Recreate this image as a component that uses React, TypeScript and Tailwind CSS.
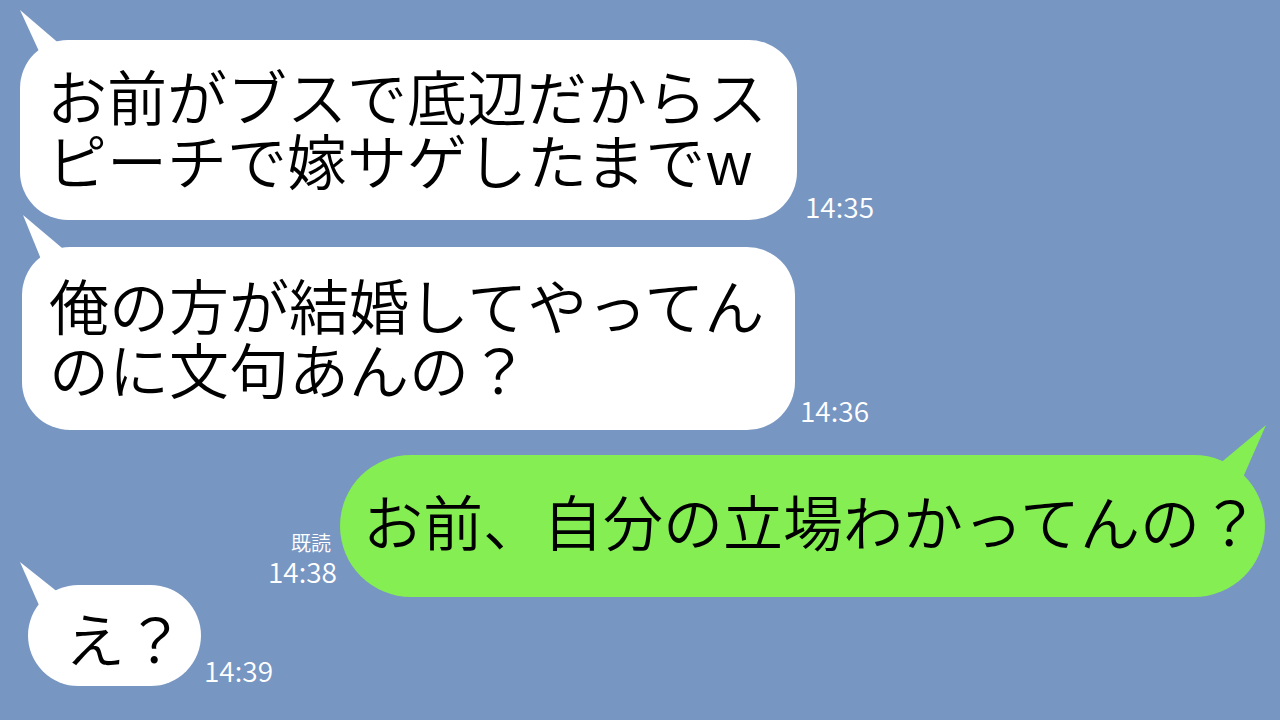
import type { ReactNode } from "react";

type TailProps = {
  className: string;
  width: number;
  height: number;
  points: string;
  color: string;
};

function Tail({ className, width, height, points, color }: TailProps) {
  return (
    <svg
      className={`absolute ${className}`}
      width={width}
      height={height}
      viewBox={`0 0 ${width} ${height}`}
    >
      <polygon points={points} fill={color} />
    </svg>
  );
}

function Time({ children, className }: { children: ReactNode; className: string }) {
  return (
    <span className={`text-[28px] leading-[28px] text-white ${className}`}>
      {children}
    </span>
  );
}

export default function App() {
  return (
    <div className="w-[1280px] h-[720px] overflow-hidden bg-[#7896c2] font-['Noto_Sans_CJK_JP','Noto_Sans',sans-serif] font-[350] text-black">
      <div className="flex flex-col pt-[40px]">
        {/* 1 */}
        <div className="flex items-end pl-[20px]">
          <div className="relative w-[777px] h-[180px] rounded-[48px] bg-white pl-[27px] pt-[23px]">
            <Tail
              className="left-0 top-[-30px]"
              width={48}
              height={56}
              points="0,0 42,36 23,50"
              color="#ffffff"
            />
            <p className="relative text-[60px] leading-[64px] whitespace-nowrap">
              お前がブスで底辺だからス
              <br />
              ピーチで嫁サゲしたまでw
            </p>
          </div>
          <Time className="ml-[8px] mb-[0px]">14:35</Time>
        </div>

        {/* 2 */}
        <div className="flex items-end pl-[22px] mt-[27px]">
          <div className="relative w-[773px] h-[183px] rounded-[48px] bg-white pl-[27px] pt-[25px]">
            <Tail
              className="left-[1px] top-[-32px]"
              width={48}
              height={56}
              points="0,0 45,38 22,54"
              color="#ffffff"
            />
            <p className="relative text-[60px] leading-[64px] whitespace-nowrap">
              俺の方が結婚してやってん
              <br />
              のに文句あんの？
            </p>
          </div>
          <Time className="ml-[5px] mb-[6px]">14:36</Time>
        </div>

        {/* 3 */}
        <div className="flex items-end justify-end pr-[15px] mt-[25px]">
          <div className="flex flex-col items-end mr-[3px] mb-[12px] text-white">
            <span className="text-[20px] leading-[22px] mb-[3px] mr-[6px]">既読</span>
            <Time className="">14:38</Time>
          </div>
          <div className="relative w-[925px] h-[142px] rounded-full bg-[#85ee52] pl-[23px] pt-[33px]">
            <Tail
              className="right-[-2px] top-[-30px]"
              width={50}
              height={58}
              points="49,0 1,40 24,57"
              color="#85ee52"
            />
            <p className="relative text-[60px] leading-[64px] whitespace-nowrap">
              お前、自分の立場わかってんの？
            </p>
          </div>
        </div>

        {/* 4 */}
        <div className="flex items-end pl-[28px] mt-[-12px]">
          <div className="relative w-[173px] h-[101px] rounded-full bg-white pl-[37px] pt-[20px]">
            <Tail
              className="left-[-8px] top-[-23px]"
              width={46}
              height={52}
              points="0,0 44,35 22,50"
              color="#ffffff"
            />
            <p className="relative text-[60px] leading-[64px] whitespace-nowrap">
              え？
            </p>
          </div>
          <Time className="ml-[3px] mb-[2px]">14:39</Time>
        </div>
      </div>
    </div>
  );
}
